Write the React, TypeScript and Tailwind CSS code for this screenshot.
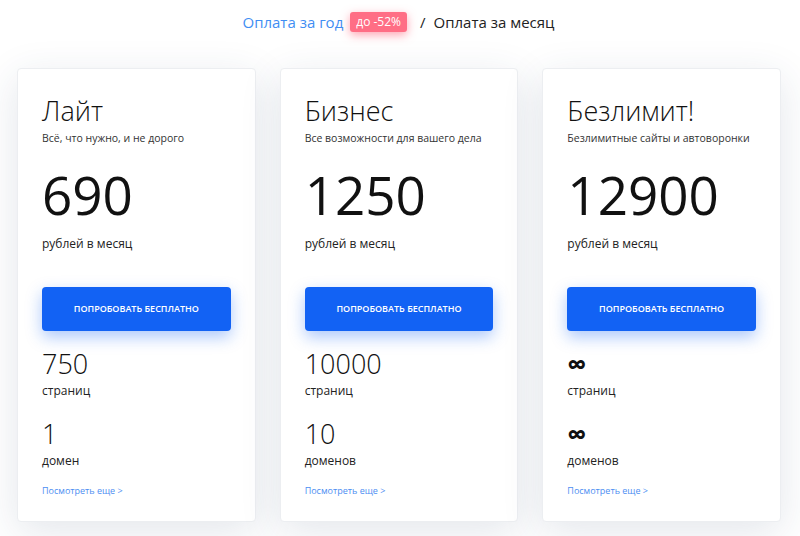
import type React from "react"

interface Plan {
  title: string
  subtitle: string
  price: string
  pages: string
  domains: string
  domainsLabel: string
}

const plans: Plan[] = [
  {
    title: "Лайт",
    subtitle: "Всё, что нужно, и не дорого",
    price: "690",
    pages: "750",
    domains: "1",
    domainsLabel: "домен",
  },
  {
    title: "Бизнес",
    subtitle: "Все возможности для вашего дела",
    price: "1250",
    pages: "10000",
    domains: "10",
    domainsLabel: "доменов",
  },
  {
    title: "Безлимит!",
    subtitle: "Безлимитные сайты и автоворонки",
    price: "12900",
    pages: "∞",
    domains: "∞",
    domainsLabel: "доменов",
  },
]

const Amount: React.FC<{ value: string }> = ({ value }) =>
  value === "∞" ? (
    <p className="text-[27px] leading-[32px] font-bold text-[#111]">∞</p>
  ) : (
    <p className="text-[27px] leading-[32px] font-light text-[#111]">{value}</p>
  )

const App: React.FC = () => {
  return (
    <div className="min-h-screen bg-white font-['Open_Sans',sans-serif] w-[800px] h-[536px] overflow-hidden">
      {/* Billing switch */}
      <div className="h-[68px] flex justify-center pt-[11px]">
        <div className="flex items-start h-[24px] mr-[3px]">
          <span className="text-[15px] leading-[22px] text-[#3f8ef3]">Оплата за год</span>
          <span className="ml-[7px] mt-[1px] h-[20px] px-[6px] rounded-[3px] bg-[#ff6e85] text-white text-[12px] leading-[20px] shadow-[0_3px_10px_rgba(255,90,115,0.55)]">
            до -52%
          </span>
          <span className="ml-[13px] text-[15px] leading-[22px] text-[#222]">/</span>
          <span className="ml-[8px] text-[15px] leading-[22px] text-[#222]">Оплата за месяц</span>
        </div>
      </div>

      {/* Plans */}
      <div className="grid grid-cols-3 gap-[24px] pl-[17px] w-[781px]">
        {plans.map((plan) => (
          <div
            key={plan.title}
            className="h-[454px] bg-white rounded-[4px] border border-[#eceef1] shadow-[0_10px_40px_rgba(40,60,100,0.13)] px-[24px] pt-[26px]"
          >
            <h3 className="text-[27px] leading-[32px] font-light text-[#111]">{plan.title}</h3>
            <p className="mt-[3px] text-[10.5px] leading-[16px] text-[#333] whitespace-nowrap">{plan.subtitle}</p>

            <p className="mt-[19px] text-[53px] leading-[60px] text-[#111]">{plan.price}</p>
            <p className="mt-[10px] text-[12px] leading-[18px] text-[#222]">рублей в месяц</p>

            <button className="mt-[34px] w-full h-[44px] rounded-[4px] bg-[#1262f4] text-white text-[9px] font-semibold uppercase shadow-[0_6px_16px_rgba(18,98,244,0.35)]">
              Попробовать бесплатно
            </button>

            <div className="mt-[17px]">
              <Amount value={plan.pages} />
            </div>
            <p className="mt-[2px] text-[12px] leading-[18px] text-[#222]">страниц</p>

            <div className="mt-[18px]">
              <Amount value={plan.domains} />
            </div>
            <p className="mt-[2px] text-[12px] leading-[18px] text-[#222]">{plan.domainsLabel}</p>

            <a href="#" className="block mt-[14px] text-[9px] leading-[14px] text-[#4c8ef2]">
              Посмотреть еще &gt;
            </a>
          </div>
        ))}
      </div>
    </div>
  )
}

export default App
